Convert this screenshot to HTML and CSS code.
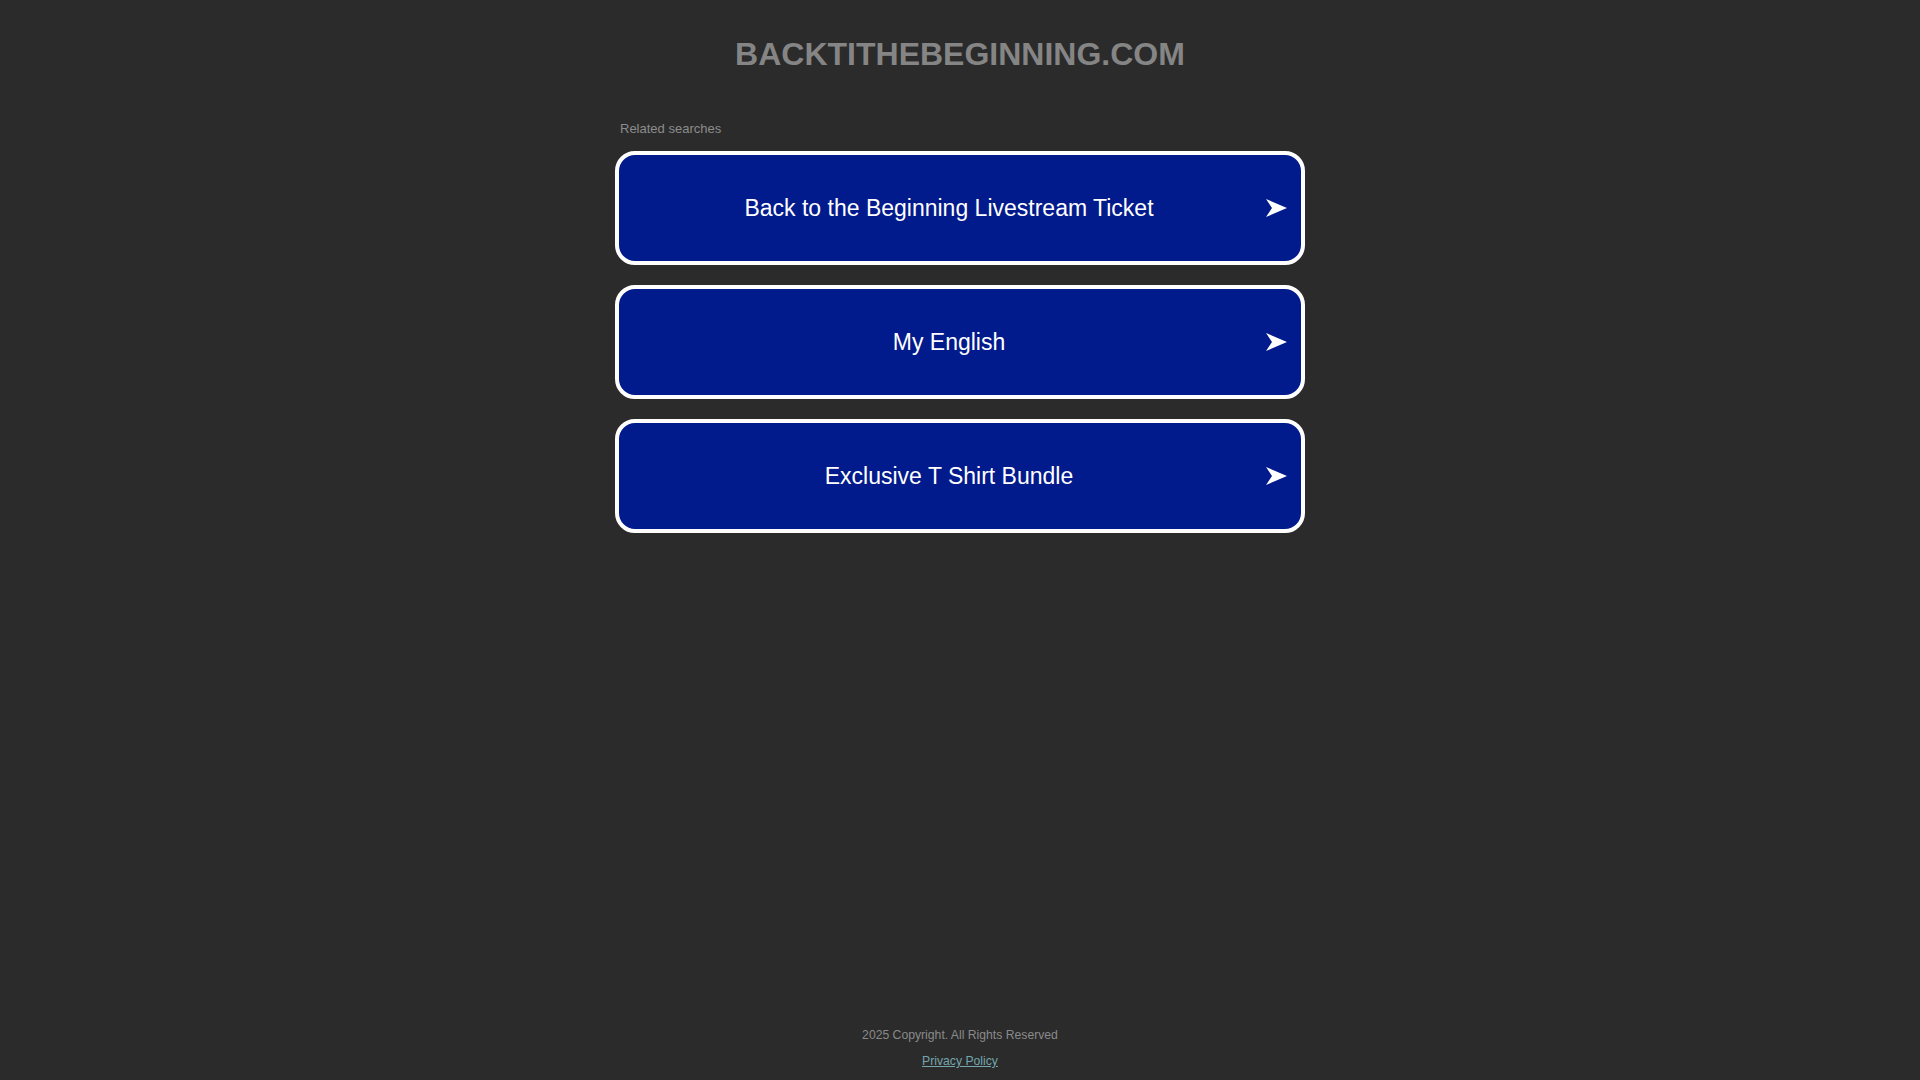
FILE: index.html
```html
<!DOCTYPE html>
<html lang="en">
<head>
<meta charset="utf-8">
<title>backtithebeginning.com</title>
<link rel="stylesheet" href="styles.css">
</head>
<body>
<div class="page">
  <main class="main">
    <h1 class="domain">BACKTITHEBEGINNING.COM</h1>
    <section class="related">
      <div class="related-title">Related searches</div>
      <div class="list">
        <a class="card" href="#"><span class="card-text">Back to the Beginning Livestream Ticket</span><svg class="arrow" width="21" height="18" viewBox="0 0 21 18"><path d="M0 0 L21 9 L0 18 L6 9 Z" fill="#fff"/></svg></a>
        <a class="card" href="#"><span class="card-text">My English</span><svg class="arrow" width="21" height="18" viewBox="0 0 21 18"><path d="M0 0 L21 9 L0 18 L6 9 Z" fill="#fff"/></svg></a>
        <a class="card" href="#"><span class="card-text">Exclusive T Shirt Bundle</span><svg class="arrow" width="21" height="18" viewBox="0 0 21 18"><path d="M0 0 L21 9 L0 18 L6 9 Z" fill="#fff"/></svg></a>
      </div>
    </section>
  </main>
  <footer class="footer">
    <div class="copyright">2025 Copyright. All Rights Reserved</div>
    <a class="privacy" href="#">Privacy Policy</a>
  </footer>
</div>
</body>
</html>
```

FILE: styles.css
```css
html, body {
  margin: 0;
  padding: 0;
  background: #2b2b2b;
  font-family: "Liberation Sans", Arial, sans-serif;
}
.page {
  min-height: 100vh;
  display: flex;
  flex-direction: column;
  align-items: center;
  box-sizing: border-box;
}
.main {
  width: 690px;
  display: flex;
  flex-direction: column;
  padding-top: 36px;
}
.domain {
  margin: 0;
  font-size: 32px;
  line-height: 36px;
  font-weight: bold;
  color: #858585;
  text-align: center;
}
.related {
  margin-top: 49px;
}
.related-title {
  font-size: 13px;
  line-height: 16px;
  color: #8c8c8c;
  padding-left: 5px;
}
.list {
  margin-top: 14px;
  display: flex;
  flex-direction: column;
  gap: 20px;
}
.card {
  display: flex;
  align-items: center;
  height: 114px;
  box-sizing: border-box;
  border: 4px solid #fff;
  border-radius: 20px;
  background: #011a8c;
  color: #fff;
  text-decoration: none;
  padding-left: 13px;
}
.card-text {
  flex: 1;
  text-align: center;
  font-size: 23px;
  line-height: 28px;
}
.arrow {
  display: block;
  flex: none;
  margin-right: 14px;
}
.footer {
  margin-top: auto;
  padding-bottom: 11px;
  display: flex;
  flex-direction: column;
  align-items: center;
  gap: 10px;
  font-size: 12.2px;
  line-height: 16px;
}
.copyright {
  color: #8a8a8a;
}
.privacy {
  color: #74a6ab;
  text-decoration: underline;
}
```
